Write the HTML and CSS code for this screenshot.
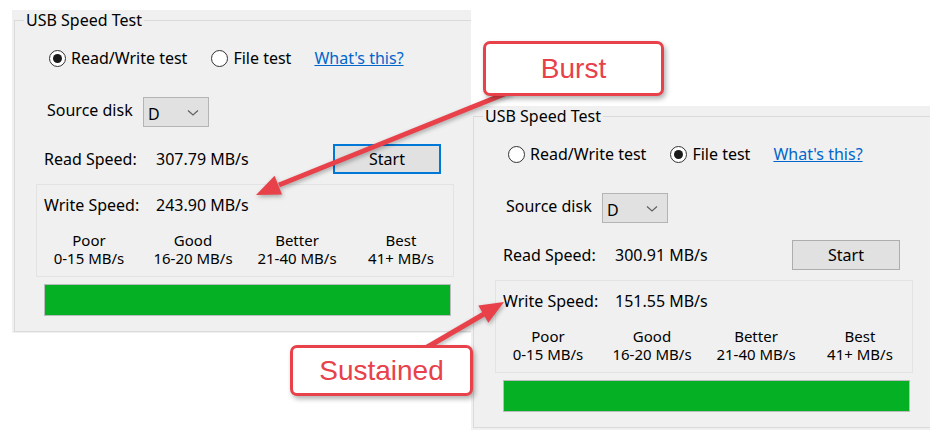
FILE: index.html
```html
<!DOCTYPE html>
<html lang="en">
<head>
  <meta charset="UTF-8">
  <title>USB Speed Test - Burst vs Sustained</title>
  <link rel="stylesheet" href="styles.css">
</head>
<body>
  <div class="stage">

    <div class="win win-left">
      <fieldset class="group">
        <legend>USB Speed Test</legend>
        <div class="row radios">
          <label class="radio"><span class="dot on"></span>Read/Write test</label>
          <label class="radio"><span class="dot"></span>File test</label>
          <a class="help" href="#">What's this?</a>
        </div>
        <div class="row source">
          <span class="src-label">Source disk</span>
          <div class="combo">
            <span>D</span>
            <svg width="12" height="8" viewBox="0 0 12 8"><path d="M1 1.5 L6 6 L11 1.5" fill="none" stroke="#606060" stroke-width="1.2"/></svg>
          </div>
        </div>
        <div class="row read">
          <span class="lbl">Read Speed:</span>
          <span class="val">307.79 MB/s</span>
          <button class="start focused">Start</button>
        </div>
        <div class="write-box">
          <div class="write-line"><span class="lbl">Write Speed:</span><span class="val">243.90 MB/s</span></div>
          <div class="scale">
            <div><div class="s">Poor</div><div class="s">0-15 MB/s</div></div>
            <div><div class="s">Good</div><div class="s">16-20 MB/s</div></div>
            <div><div class="s">Better</div><div class="s">21-40 MB/s</div></div>
            <div><div class="s">Best</div><div class="s">41+ MB/s</div></div>
          </div>
        </div>
        <div class="bar"></div>
      </fieldset>
    </div>

    <div class="win win-right">
      <fieldset class="group">
        <legend>USB Speed Test</legend>
        <div class="row radios">
          <label class="radio"><span class="dot"></span>Read/Write test</label>
          <label class="radio"><span class="dot on"></span>File test</label>
          <a class="help" href="#">What's this?</a>
        </div>
        <div class="row source">
          <span class="src-label">Source disk</span>
          <div class="combo">
            <span>D</span>
            <svg width="12" height="8" viewBox="0 0 12 8"><path d="M1 1.5 L6 6 L11 1.5" fill="none" stroke="#606060" stroke-width="1.2"/></svg>
          </div>
        </div>
        <div class="row read">
          <span class="lbl">Read Speed:</span>
          <span class="val">300.91 MB/s</span>
          <button class="start">Start</button>
        </div>
        <div class="write-box">
          <div class="write-line"><span class="lbl">Write Speed:</span><span class="val">151.55 MB/s</span></div>
          <div class="scale">
            <div><div class="s">Poor</div><div class="s">0-15 MB/s</div></div>
            <div><div class="s">Good</div><div class="s">16-20 MB/s</div></div>
            <div><div class="s">Better</div><div class="s">21-40 MB/s</div></div>
            <div><div class="s">Best</div><div class="s">41+ MB/s</div></div>
          </div>
        </div>
        <div class="bar"></div>
      </fieldset>
    </div>

    <!-- callout arrows -->
    <svg class="arrows" width="930" height="430" viewBox="0 0 930 430">
      <line x1="512" y1="91" x2="279" y2="185" stroke="#e8414a" stroke-width="5"/>
      <polygon points="256,195 282,194.4 274.6,175.8" fill="#e8414a"/>
      <line x1="424" y1="349" x2="484" y2="314" stroke="#e8414a" stroke-width="5"/>
      <polygon points="504,302 488.3,322.7 478.3,305.5" fill="#e8414a"/>
    </svg>

    <div class="callout burst">Burst</div>
    <div class="callout sustained">Sustained</div>
  </div>
</body>
</html>
```

FILE: styles.css
```css
body { margin: 0; background: #fff; font-family: "Noto Sans", sans-serif; font-size: 16px; color: #000; }

.stage {
  position: relative; width: 930px; height: 430px; overflow: hidden;
  display: flex; align-items: flex-start; background: #fff;
}

.win { width: 459px; background: #f0f0f0; overflow: hidden; flex: none; }
.win-left { margin: 10px 0 0 12px; height: 323px; }
.win-right { margin-top: 106px; height: 340px; }

.group {
  box-sizing: border-box; height: 322px; margin: 0 0 0 2px; padding: 0;
  border: 1px solid #dadada; border-right: 0; min-width: 0;
}
.group legend { margin-left: 9px; padding: 0 2px; line-height: 20px; }

.row { display: flex; align-items: center; }

.radios { margin: 18px 0 0 34px; height: 20px; }
.radio { display: flex; align-items: center; margin-right: 24px; }
.dot {
  box-sizing: border-box; width: 17px; height: 17px; border-radius: 50%;
  border: 1px solid #333; background: #fff; margin-right: 5px;
  display: flex; align-items: center; justify-content: center;
}
.dot.on::after { content: ""; width: 9px; height: 9px; border-radius: 50%; background: #1a1a1a; }
.help { color: #0066cc; text-decoration: underline; margin-left: -1px; }

.source { margin: 29px 0 0 32px; height: 30px; }
.src-label { width: 96px; padding-bottom: 4px; }
.combo {
  box-sizing: border-box; width: 66px; height: 30px; background: #e1e1e1;
  border: 1px solid #b4b4b4; display: flex; align-items: center;
  justify-content: space-between; padding: 3px 9px 0 4px;
}
.combo svg { margin-top: -2px; }

.read { margin: 17px 0 0 29px; height: 30px; }
.lbl { width: 112px; }
.val { width: 177px; }
.start {
  box-sizing: border-box; width: 108px; height: 30px; margin: 0;
  background: #e1e1e1; border: 1px solid #adadad; font: inherit; color: #000; padding: 0;
}
.start.focused { border: 2px solid #0078d7; }

.write-box {
  box-sizing: border-box; width: 418px; height: 93px; margin: 10px 0 0 21px;
  border: 1px solid #e3e3e3; padding: 10px 0 0 0;
}
.write-line { display: flex; padding-left: 7px; line-height: 20px; }
.write-line .val { width: auto; }
.scale {
  display: grid; grid-template-columns: repeat(4, 1fr); margin-top: 16px;
  text-align: center; font-size: 15px;
}
.scale .s { height: 18px; line-height: 18px; }

.bar {
  box-sizing: border-box; width: 407px; height: 32px; margin: 7px 0 0 29px;
  background: #06b025; border: 1px solid #bcbcbc;
}

.arrows { position: absolute; left: 0; top: 0; filter: drop-shadow(1px 2px 2px rgba(0,0,0,.3)); }

.callout {
  position: absolute; box-sizing: border-box; background: #fff;
  border: 3px solid #e8414a; border-radius: 7px; color: #e8414a;
  font-family: "Liberation Sans", Arial, sans-serif; font-size: 28px;
  display: flex; align-items: center; justify-content: center;
  box-shadow: 2px 3px 5px rgba(0,0,0,.3);
}
.burst { left: 483px; top: 41px; width: 181px; height: 55px; }
.sustained { left: 290px; top: 345px; width: 183px; height: 51px; }
```
